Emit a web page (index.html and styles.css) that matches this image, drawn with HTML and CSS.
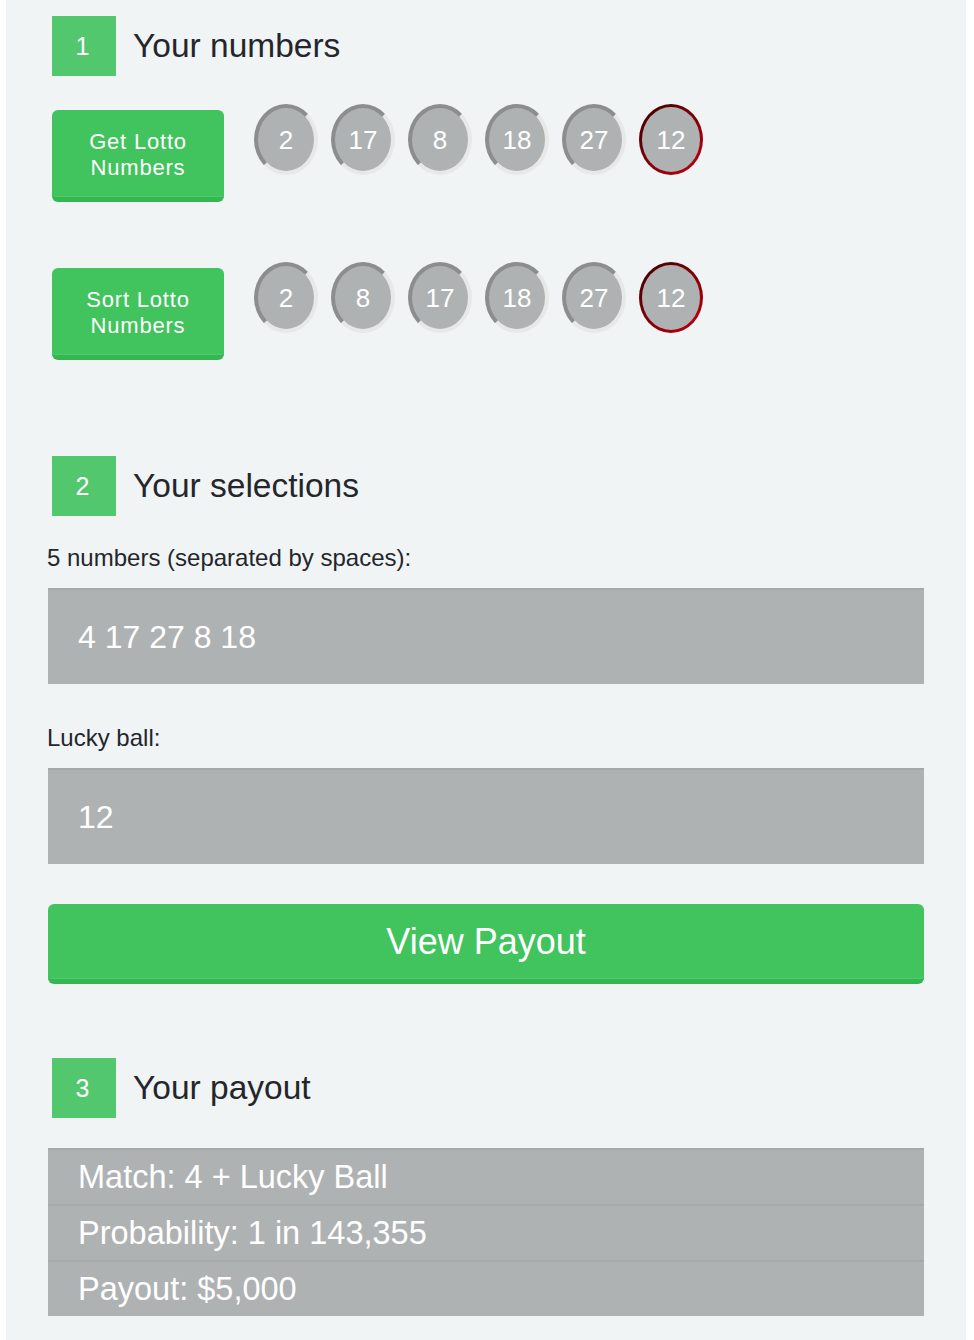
FILE: index.html
```html
<!DOCTYPE html>
<html lang="en">
<head>
<meta charset="utf-8">
<title>Lotto</title>
<link rel="stylesheet" href="styles.css">
</head>
<body>
<main class="page">
  <section class="step">
    <div class="step-head"><span class="badge">1</span><h2 class="step-title">Your numbers</h2></div>
    <div class="ball-row first">
      <button class="btn btn-small">Get Lotto<br>Numbers</button>
      <div class="balls">
        <span class="ball">2</span><span class="ball">17</span><span class="ball">8</span><span class="ball">18</span><span class="ball">27</span><span class="ball lucky">12</span>
      </div>
    </div>
    <div class="ball-row second">
      <button class="btn btn-small">Sort Lotto<br>Numbers</button>
      <div class="balls">
        <span class="ball">2</span><span class="ball">8</span><span class="ball">17</span><span class="ball">18</span><span class="ball">27</span><span class="ball lucky">12</span>
      </div>
    </div>
  </section>

  <section class="step step-2">
    <div class="step-head"><span class="badge">2</span><h2 class="step-title">Your selections</h2></div>
    <label class="field-label first-label">5 numbers (separated by spaces):</label>
    <div class="field">4 17 27 8 18</div>
    <label class="field-label">Lucky ball:</label>
    <div class="field">12</div>
    <button class="btn btn-wide">View Payout</button>
  </section>

  <section class="step step-3">
    <div class="step-head"><span class="badge">3</span><h2 class="step-title">Your payout</h2></div>
    <ul class="payout">
      <li>Match: 4 + Lucky Ball</li>
      <li>Probability: 1 in 143,355</li>
      <li>Payout: $5,000</li>
    </ul>
  </section>
</main>
</body>
</html>
```
FILE: styles.css
```css
* { box-sizing: border-box; }
html, body { margin: 0; padding: 0; background: #ffffff; }
body { font-family: "Liberation Sans", Arial, sans-serif; color: #24262c; }

.page {
  width: 960px;
  margin-left: 6px;
  min-height: 1340px;
  background: #f0f4f5;
  padding: 16px 42px 40px 42px;
}

.step-head { display: flex; align-items: center; gap: 17px; margin-left: 4px; }
.badge {
  width: 64px; height: 60px;
  background: #52c76e; color: #fff;
  font-size: 25px;
  padding-right: 3px;
  display: flex; align-items: center; justify-content: center;
}
.step-title { margin: 0; font-weight: 400; font-size: 33.5px; color: #24262c; line-height: 40px; }

.ball-row { display: flex; align-items: flex-start; margin-left: 4px; }
.ball-row.first { margin-top: 28px; }
.ball-row.second { margin-top: 60px; }

.btn {
  font-family: "Liberation Sans", Arial, sans-serif;
  color: #fff;
  background: #41c35d;
  border: 0;
  border-bottom: 5px solid #34b650;
  box-shadow: inset 0 -1px 0 #4fcb6a;
  border-radius: 6px;
  cursor: pointer;
}
.btn-small {
  width: 172px; height: 92px; margin-top: 6px;
  font-size: 22px; line-height: 26px; letter-spacing: 0.8px;
  padding: 2px 0 0 0;
}
.balls { display: flex; gap: 13px; margin-left: 30px; }
.ball {
  width: 64px; height: 71px;
  border-radius: 50%;
  border: 4px solid;
  border-color: #8b8d8e #e7e8e8 #e7e8e8 #8b8d8e;
  background: #afb2b3;
  color: #fff;
  font-size: 26px;
  padding-top: 2px;
  display: flex; align-items: center; justify-content: center;
}
.ball.lucky {
  border: 3px solid transparent;
  background:
    linear-gradient(#afb2b3, #afb2b3) padding-box,
    linear-gradient(135deg, #3a0000 0%, #7a0006 45%, #c4000f 100%) border-box;
}

.step-2 { margin-top: 96px; }
.field-label { display: block; font-size: 24px; line-height: 28px; margin-top: 40px; margin-left: -1px; color: #24262c; }
.field-label.first-label { margin-top: 28px; }
.field {
  margin-top: 16px;
  height: 96px;
  background: #afb2b3;
  border-top: 2px solid #a6a9aa;
  color: #fff;
  font-size: 32px;
  padding-left: 30px;
  display: flex; align-items: center;
}
.btn-wide {
  display: block; width: 100%;
  margin-top: 40px; height: 80px;
  font-size: 36px;
  padding: 0;
}

.step-3 { margin-top: 74px; }
.payout { list-style: none; margin: 30px 0 0 0; padding: 0; background: #afb2b3; }
.payout li {
  height: 56px;
  border-top: 2px solid #a6a9aa;
  color: #fff;
  font-size: 32.5px;
  padding-left: 30px;
  display: flex; align-items: center;
}
```
